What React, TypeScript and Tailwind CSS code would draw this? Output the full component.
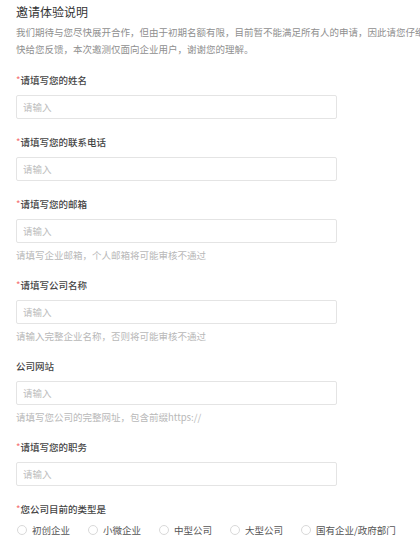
import React from "react";

const fields: { label: string; required: boolean; hint?: string }[] = [
  { label: "请填写您的姓名", required: true },
  { label: "请填写您的联系电话", required: true },
  { label: "请填写您的邮箱", required: true, hint: "请填写企业邮箱，个人邮箱将可能审核不通过" },
  { label: "请填写公司名称", required: true, hint: "请输入完整企业名称，否则将可能审核不通过" },
  { label: "公司网站", required: false, hint: "请填写您公司的完整网址，包含前缀https://" },
  { label: "请填写您的职务", required: true },
];

const types = ["初创企业", "小微企业", "中型公司", "大型公司", "国有企业/政府部门"];

function Label({ text, required }: { text: string; required: boolean }) {
  return (
    <div className="h-[14px] leading-[14px] text-[9.5px] text-[#444] font-medium whitespace-nowrap">
      {required && <span className="text-[#f56c6c] font-normal">*</span>}
      {text}
    </div>
  );
}

export default function App() {
  return (
    <div
      className="w-[420px] h-[550px] overflow-hidden bg-white pl-4 pt-[4px]"
      style={{ fontFamily: '"Noto Sans CJK SC", "Noto Sans", sans-serif' }}
    >
      <div className="h-[16px] leading-[16px] text-[12px] text-[#333]">邀请体验说明</div>
      <div className="mt-[4px] text-[9.5px] leading-[17px] text-[#8f8f8f] whitespace-nowrap">
        <div>我们期待与您尽快展开合作，但由于初期名额有限，目前暂不能满足所有人的申请，因此请您仔细填写以下信息，我们会尽</div>
        <div>快给您反馈，本次邀测仅面向企业用户，谢谢您的理解。</div>
      </div>
      <div className="mt-[15px] flex flex-col gap-[16px]">
        {fields.map((f) => (
          <div key={f.label} className="flex flex-col">
            <Label text={f.label} required={f.required} />
            <input
              placeholder="请输入"
              className="mt-[8px] w-[321px] h-[24px] border border-[#e4e4e4] rounded-[2px] px-[6px] text-[9.5px] text-[#333] placeholder:text-[#bdbdbd] outline-none"
            />
            {f.hint && (
              <div className="mt-[5px] h-[14px] leading-[14px] text-[9.5px] text-[#b8b8b8] whitespace-nowrap">{f.hint}</div>
            )}
          </div>
        ))}
        <div className="flex flex-col">
          <Label text="您公司目前的类型是" required={true} />
          <div className="mt-[7px] flex items-center gap-[18px] pl-[1px]">
            {types.map((t) => (
              <label key={t} className="flex items-center gap-[5px]">
                <span className="w-[10px] h-[10px] rounded-full border border-[#d9d9d9] bg-white" />
                <span className="h-[14px] leading-[14px] text-[9.5px] text-[#555] whitespace-nowrap">{t}</span>
              </label>
            ))}
          </div>
        </div>
      </div>
    </div>
  );
}
